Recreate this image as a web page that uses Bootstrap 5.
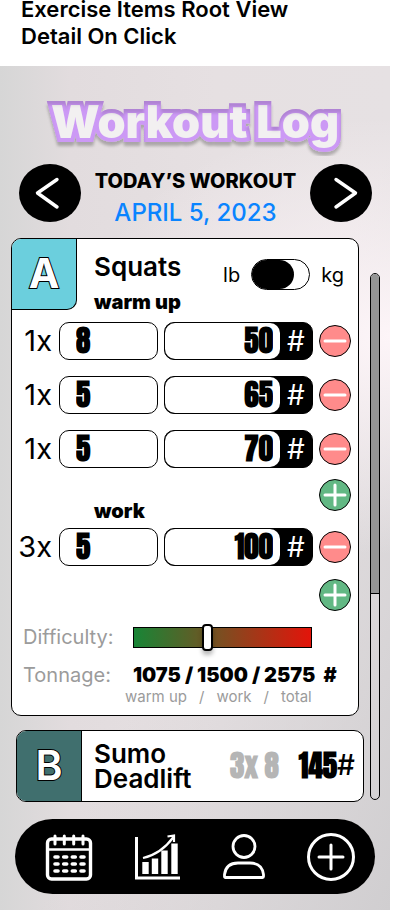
<!DOCTYPE html>
<html lang="en">
<head>
<meta charset="utf-8">
<meta name="viewport" content="width=device-width, initial-scale=1">
<title>Workout Log</title>
<link href="https://cdn.jsdelivr.net/npm/bootstrap@5.3.0/dist/css/bootstrap.min.css" rel="stylesheet">
<style>
  body { font-family: Inter, "Liberation Sans", sans-serif; color: #000; line-height: 1.2; background: #fff; }
  .page-note { font-size: 22px; font-weight: 600; line-height: 27px; margin-top: -4px; padding: 0 21px 16px; max-width: 340px; }
  .app-screen {
    margin-right: 20px; padding-bottom: 16px;
    background:
      radial-gradient(ellipse 80% 26% at 100% 32%, #fdf5f8 0, #fdf5f800 100%),
      linear-gradient(to bottom right, #d0ced000 55%, #d0ced0 100%),
      linear-gradient(to right, #d6d6d6 0, #e2dcde 18%, #e6e0e2 55%, #e6e1e3 100%);
  }
  .app-title { padding-top: 26px; }
  .app-title svg { display: block; width: 100%; height: 64px; }
  .app-title text { font-size: 45px; font-weight: 900; fill: #f2f0f1; stroke: #cc99f5; stroke-width: 8px; paint-order: stroke; }
  .date-bar { padding: 8px 18px 10px 19px; }
  .round-btn { width: 62px; height: 58px; border: 0; border-radius: 50%; background: #000; padding: 0; }
  .date-head { font-size: 20px; font-weight: 800; line-height: 34px; }
  .date-value { font-size: 24px; font-weight: 500; line-height: 30px; color: #0a84ff; }
  .list-area { padding: 0 10px 0 11px; gap: 6px; }
  .panel { border: 1px solid #000; border-radius: 10px; background: #fff; overflow: hidden; }
  .panel-b { margin: 14px 0 0 5px; width: 348px; max-width: 100%; }
  .stack { padding-right: 5px; }
  .tile { width: 65px; height: 71px; font-size: 41px; font-weight: 700; color: #fff; -webkit-text-stroke: 2px #000; paint-order: stroke fill; border-right: 1px solid #000; flex: none; }
  .tile-a { background: #6bcfdd; border-bottom: 1px solid #000; border-radius: 0 0 10px 0; }
  .tile-b { background: #406f6e; font-weight: 600; height: 70px; }
  .ex-name { font-size: 26px; font-weight: 600; line-height: 25px; }
  .ex-main { padding: 15px 14px 0 17px; }
  .set-kind { font-size: 20px; font-weight: 900; line-height: 24px; }
  .unit { font-size: 20px; line-height: 24px; padding-top: 5px; }
  .unit-switch.form-check-input { width: 59px; height: 31px; margin: 0 11px; border: 1px solid #000; border-radius: 16px; background: #fff; position: static; float: none; }
  .unit-switch::before { content: ""; display: block; width: 42px; height: 29px; border-radius: 15px; background: #000; }
  .unit-switch:checked::before { margin-left: auto; }
  .sets { display: grid; gap: 16px; padding-top: 8px; }
  .set-line { display: grid; grid-template-columns: 41px 2fr 3fr 32px; column-gap: 6px; align-items: center; padding-right: 7px; }
  .set-count { font-size: 29px; font-weight: 400; line-height: 38px; text-align: right; padding-right: 1px; }
  .num-box { font-family: Impact, Anton, "Liberation Sans Narrow", "Liberation Sans", sans-serif; font-size: 29px; font-weight: 700; }
  .reps { height: 38px; width: 100%; min-width: 0; border: 1px solid #000; border-radius: 10px; padding: 0 16px; background: #fff; color: #000; }
  .load-group { border: 1px solid #000; border-radius: 10px; background: #000; min-width: 0; }
  .load-group input { height: 36px; width: 0; min-width: 0; border: 0; border-radius: 10px; padding: 0 7px; text-align: right; background: #fff; color: #000; }
  .hash { width: 32px; font-size: 28px; line-height: 36px; color: #fff; text-align: center; }
  .sign-btn { width: 32px; height: 32px; border: 1px solid #000; border-radius: 50%; padding: 0; flex: none; }
  .sign-btn svg { display: block; }
  .minus { background: #ff8b8b; }
  .plus { background: #62b884; }
  .work-head { padding: 11px 7px 5px 82px; height: 60px; }
  .add-end { padding: 13px 7px 0; }
  .stat { font-size: 20px; font-weight: 400; line-height: 26px; color: #9b9b9b; width: 110px; }
  .stats { padding: 13px 11px 9px; }
  .effort { appearance: none; width: 179px; height: 21px; border: 1px solid #000; margin: 0; background: linear-gradient(to right, #188536, #e3140a); }
  .effort::-webkit-slider-thumb { appearance: none; width: 11px; height: 27px; border: 2px solid #000; border-radius: 4px; background: #fff; box-shadow: 0 4px 4px #0004; }
  .tons { font-size: 20px; font-weight: 900; line-height: 26px; }
  .tons-key { font-size: 15px; font-weight: 400; line-height: 18px; color: #9b9b9b; padding-left: 102px; gap: 12px; }
  .track { width: 10px; margin-top: 35px; border: 1px solid #000; border-radius: 5px; overflow: hidden; flex: none; margin-bottom: 2px; }
  .track-thumb { height: 61%; background: #949494; border-bottom: 1px solid #000; }
  .grey { color: #b5b5b5; margin-right: 20px; }
  .b-hash { font-size: 28px; font-weight: 500; }
  .tab-strip { margin: 17px 15px 0; height: 75px; border-radius: 38px; background: #000; padding: 0 19px 0 30px; }
  .tab-strip a { display: block; }
  .tab-strip svg { display: block; }
</style>
<script src="https://cdn.jsdelivr.net/npm/bootstrap@5.3.0/dist/js/bootstrap.bundle.min.js"></script>
</head>
<body>
<div class="overflow-hidden">
  <div class="page-note">Exercise Items Root View Detail On Click</div>
  <div class="app-screen">
    <h1 class="app-title m-0">
      <svg role="img" aria-label="Workout Log">
        <defs>
          <filter id="raised" x="-5%" y="-20%" width="110%" height="150%">
            <feOffset in="SourceAlpha" dy="4" result="o"/>
            <feGaussianBlur in="o" stdDeviation="1.5" result="ob"/>
            <feComposite in="SourceAlpha" in2="ob" operator="out" result="inner"/>
            <feFlood flood-color="#000" flood-opacity=".28"/>
            <feComposite in2="inner" operator="in" result="shade"/>
            <feFlood flood-color="#000" flood-opacity=".25"/>
            <feComposite in2="ob" operator="in" result="drop"/>
            <feMerge><feMergeNode in="drop"/><feMergeNode in="SourceGraphic"/><feMergeNode in="shade"/></feMerge>
          </filter>
        </defs>
        <text x="50%" y="46" text-anchor="middle" filter="url(#raised)">Workout Log</text>
      </svg>
    </h1>

    <div class="date-bar d-flex align-items-start justify-content-between">
      <button type="button" class="round-btn" aria-label="Previous day">
        <svg width="62" height="58" fill="none" stroke="#fff" stroke-width="3.4" stroke-linecap="round" stroke-linejoin="round"><path d="M38 15.500 18.500 29 38 43"/></svg>
      </button>
      <div class="text-center">
        <div class="date-head">TODAY’S WORKOUT</div>
        <div class="date-value">APRIL 5, 2023</div>
      </div>
      <button type="button" class="round-btn" aria-label="Next day">
        <svg width="62" height="58" fill="none" stroke="#fff" stroke-width="3.4" stroke-linecap="round" stroke-linejoin="round"><path d="M26 15.500 45.500 29 26 43"/></svg>
      </button>
    </div>

    <div class="list-area d-flex">
      <div class="flex-grow-1">
        <section class="stack">
          <div class="panel">
            <div class="d-flex">
              <div class="tile tile-a d-flex align-items-center justify-content-center">A</div>
              <div class="ex-main flex-grow-1">
                <div class="d-flex align-items-start justify-content-between">
                  <div class="ex-name">Squats</div>
                  <div class="d-flex align-items-center unit">
                    <label for="unit">lb</label>
                    <input class="form-check-input unit-switch" type="checkbox" role="switch" id="unit">
                    <label for="unit">kg</label>
                  </div>
                </div>
                <div class="set-kind">warm up</div>
              </div>
            </div>
            <div class="sets">
              <div class="set-line">
                <label class="set-count" for="r1">1x</label>
                <input class="num-box reps" id="r1" type="text" value="8">
                <div class="load-group d-flex"><input class="num-box flex-grow-1" id="w1" type="text" value="50"><label class="hash" for="w1">#</label></div>
                <button type="button" class="sign-btn minus" aria-label="Remove set"><svg width="30" height="30"><path d="M5 15h20" stroke="#fff" stroke-width="3" stroke-linecap="round"/></svg></button>
              </div>
              <div class="set-line">
                <label class="set-count" for="r2">1x</label>
                <input class="num-box reps" id="r2" type="text" value="5">
                <div class="load-group d-flex"><input class="num-box flex-grow-1" id="w2" type="text" value="65"><label class="hash" for="w2">#</label></div>
                <button type="button" class="sign-btn minus" aria-label="Remove set"><svg width="30" height="30"><path d="M5 15h20" stroke="#fff" stroke-width="3" stroke-linecap="round"/></svg></button>
              </div>
              <div class="set-line">
                <label class="set-count" for="r3">1x</label>
                <input class="num-box reps" id="r3" type="text" value="5">
                <div class="load-group d-flex"><input class="num-box flex-grow-1" id="w3" type="text" value="70"><label class="hash" for="w3">#</label></div>
                <button type="button" class="sign-btn minus" aria-label="Remove set"><svg width="30" height="30"><path d="M5 15h20" stroke="#fff" stroke-width="3" stroke-linecap="round"/></svg></button>
              </div>
            </div>
            <div class="work-head d-flex justify-content-between">
              <div class="set-kind align-self-end">work</div>
              <button type="button" class="sign-btn plus" aria-label="Add warm up set"><svg width="30" height="30"><path d="M5 15h20M15 5v20" stroke="#fff" stroke-width="3" stroke-linecap="round"/></svg></button>
            </div>
            <div class="set-line">
              <label class="set-count" for="r4">3x</label>
              <input class="num-box reps" id="r4" type="text" value="5">
              <div class="load-group d-flex"><input class="num-box flex-grow-1" id="w4" type="text" value="100"><label class="hash" for="w4">#</label></div>
              <button type="button" class="sign-btn minus" aria-label="Remove set"><svg width="30" height="30"><path d="M5 15h20" stroke="#fff" stroke-width="3" stroke-linecap="round"/></svg></button>
            </div>
            <div class="add-end d-flex justify-content-end">
              <button type="button" class="sign-btn plus" aria-label="Add work set"><svg width="30" height="30"><path d="M5 15h20M15 5v20" stroke="#fff" stroke-width="3" stroke-linecap="round"/></svg></button>
            </div>
            <div class="stats">
              <div class="d-flex align-items-center mb-2">
                <label class="stat" for="effort">Difficulty:</label>
                <input class="effort" id="effort" type="range" min="0" max="100" value="41">
              </div>
              <div class="d-flex align-items-center pt-1">
                <div class="stat">Tonnage:</div>
                <div class="tons text-nowrap">1075 / 1500 / 2575 <span class="ps-1">#</span></div>
              </div>
              <div class="tons-key d-flex"><span>warm up</span><span>/</span><span>work</span><span>/</span><span>total</span></div>
            </div>
          </div>
        </section>
        <div class="panel panel-b d-flex">
          <div class="tile tile-b d-flex align-items-center justify-content-center">B</div>
          <div class="d-flex align-items-center flex-grow-1 ps-2 pe-2">
            <div class="ex-name flex-grow-1 ps-1">Sumo<br>Deadlift</div>
            <div class="num-box grey text-nowrap">3x 8</div>
            <div class="d-flex align-items-center"><span class="num-box">145</span><span class="b-hash">#</span></div>
          </div>
        </div>
      </div>
      <div class="track"><div class="track-thumb"></div></div>
    </div>

    <nav class="tab-strip d-flex align-items-center justify-content-between" aria-label="Main">
      <a href="#calendar" aria-label="Calendar">
        <svg width="48" height="50" fill="none" stroke="#fff" stroke-linecap="round">
          <rect x="2.500" y="7" width="43" height="40" rx="4" stroke-width="3.400"/>
          <path d="M3 17.500h42" stroke-width="2.500"/>
          <path d="M10 4v8M19.300 4v8M28.700 4v8M38 4v8" stroke-width="3"/>
          <path d="M10 25h3M18.700 25h3M27.300 25h3M36 25h3M10 32h3M18.700 32h3M27.300 32h3M36 32h3M10 39h3M18.700 39h3M27.300 39h3M36 39h3" stroke-width="3.600"/>
        </svg>
      </a>
      <a href="#progress" aria-label="Progress">
        <svg width="48" height="50" fill="none" stroke="#fff">
          <path d="M3.500 5v41H47" stroke-width="3"/>
          <path d="M12.500 30v12M22 26.500V42M31.500 18.500V42M41.500 11.500V42" stroke-width="6.400"/>
          <path d="M10 26Q28 22 40.500 5M34.500 4.500 41 3.500V10" stroke-width="2.200"/>
        </svg>
      </a>
      <a href="#profile" aria-label="Profile">
        <svg width="44" height="50" fill="none" stroke="#fff" stroke-width="2.800" stroke-linejoin="round">
          <circle cx="22" cy="14.500" r="11"/>
          <path d="M2.500 44.500v-2Q4 31 16 31h12Q40 31 41.500 42.500v2q0 1-1 1h-37q-1 0-1-1z"/>
        </svg>
      </a>
      <a href="#add" aria-label="Add">
        <svg width="50" height="50" fill="none" stroke="#fff" stroke-width="3" stroke-linecap="round">
          <circle cx="25" cy="25" r="22.500"/><path d="M13 25h24M25 13v24"/>
        </svg>
      </a>
    </nav>
  </div>
</div>
</body>
</html>
